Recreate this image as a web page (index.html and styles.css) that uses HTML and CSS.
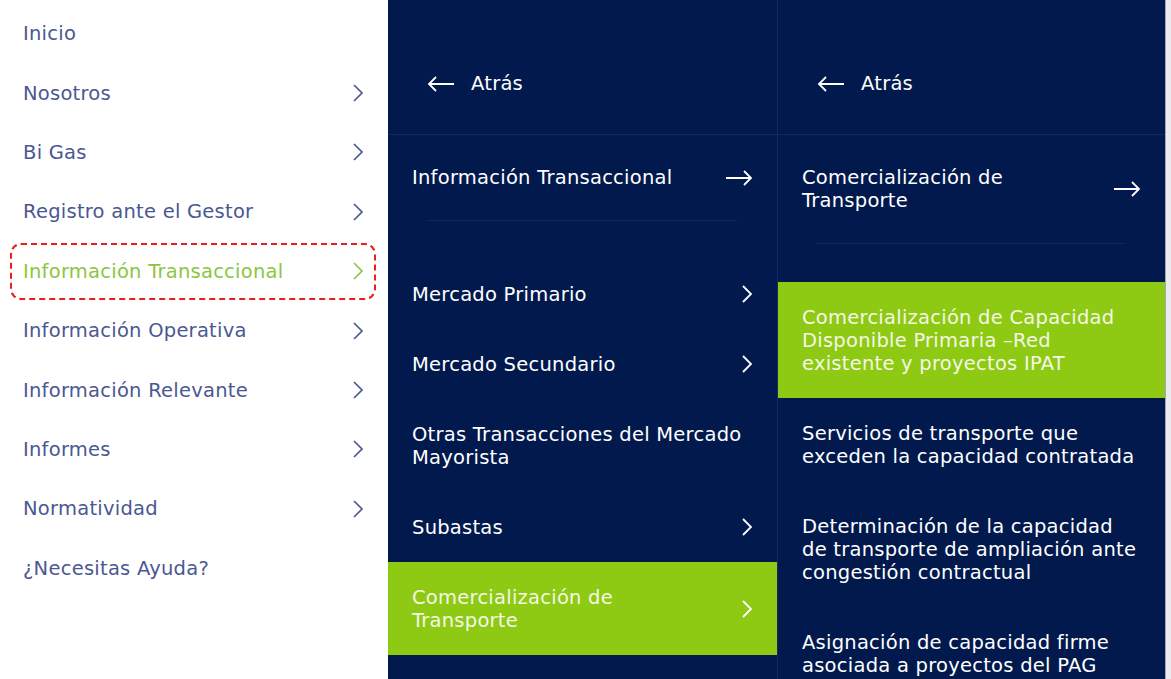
FILE: index.html
```html
<!DOCTYPE html>
<html lang="es">
<head>
<meta charset="utf-8">
<title>Menú</title>
<link rel="stylesheet" href="styles.css">
</head>
<body>
<div class="page">
  <nav class="main">
    <ul class="main-list">
      <li class="main-item"><span>Inicio</span></li>
      <li class="main-item"><span>Nosotros</span><svg class="chev" viewBox="0 0 12 20"><path d="M2 2 L10 10 L2 18"/></svg></li>
      <li class="main-item"><span>Bi Gas</span><svg class="chev" viewBox="0 0 12 20"><path d="M2 2 L10 10 L2 18"/></svg></li>
      <li class="main-item"><span>Registro ante el Gestor</span><svg class="chev" viewBox="0 0 12 20"><path d="M2 2 L10 10 L2 18"/></svg></li>
      <li class="main-item active"><span>Información Transaccional</span><svg class="chev" viewBox="0 0 12 20"><path d="M2 2 L10 10 L2 18"/></svg></li>
      <li class="main-item"><span>Información Operativa</span><svg class="chev" viewBox="0 0 12 20"><path d="M2 2 L10 10 L2 18"/></svg></li>
      <li class="main-item"><span>Información Relevante</span><svg class="chev" viewBox="0 0 12 20"><path d="M2 2 L10 10 L2 18"/></svg></li>
      <li class="main-item"><span>Informes</span><svg class="chev" viewBox="0 0 12 20"><path d="M2 2 L10 10 L2 18"/></svg></li>
      <li class="main-item"><span>Normatividad</span><svg class="chev" viewBox="0 0 12 20"><path d="M2 2 L10 10 L2 18"/></svg></li>
      <li class="main-item"><span>¿Necesitas Ayuda?</span></li>
    </ul>
  </nav>

  <section class="panel">
    <div class="back"><svg class="arrow" viewBox="0 0 28 18"><path d="M27 9 H2 M9 2 L2 9 L9 16"/></svg><span>Atrás</span></div>
    <div class="title"><span>Información Transaccional</span><svg class="arrow" viewBox="0 0 28 18"><path d="M1 9 H26 M19 2 L26 9 L19 16"/></svg></div>
    <ul class="sub-list">
      <li class="sub-item"><span>Mercado Primario</span><svg class="chev" viewBox="0 0 12 20"><path d="M2 2 L10 10 L2 18"/></svg></li>
      <li class="sub-item"><span>Mercado Secundario</span><svg class="chev" viewBox="0 0 12 20"><path d="M2 2 L10 10 L2 18"/></svg></li>
      <li class="sub-item"><span>Otras Transacciones del Mercado<br>Mayorista</span></li>
      <li class="sub-item"><span>Subastas</span><svg class="chev" viewBox="0 0 12 20"><path d="M2 2 L10 10 L2 18"/></svg></li>
      <li class="sub-item selected"><span>Comercialización de<br>Transporte</span><svg class="chev" viewBox="0 0 12 20"><path d="M2 2 L10 10 L2 18"/></svg></li>
    </ul>
  </section>

  <section class="panel panel-third">
    <div class="back"><svg class="arrow" viewBox="0 0 28 18"><path d="M27 9 H2 M9 2 L2 9 L9 16"/></svg><span>Atrás</span></div>
    <div class="title"><span>Comercialización de<br>Transporte</span><svg class="arrow" viewBox="0 0 28 18"><path d="M1 9 H26 M19 2 L26 9 L19 16"/></svg></div>
    <ul class="sub-list">
      <li class="sub-item selected"><span>Comercialización de Capacidad<br>Disponible Primaria –Red<br>existente y proyectos IPAT</span></li>
      <li class="sub-item"><span>Servicios de transporte que<br>exceden la capacidad contratada</span></li>
      <li class="sub-item"><span>Determinación de la capacidad<br>de transporte de ampliación ante<br>congestión contractual</span></li>
      <li class="sub-item"><span>Asignación de capacidad firme<br>asociada a proyectos del PAG</span></li>
    </ul>
  </section>

  <div class="rest"></div>
</div>
</body>
</html>
```

FILE: styles.css
```css
* { box-sizing: border-box; }
html, body {
  margin: 0;
  padding: 0;
  height: 100%;
  overflow: hidden;
}
body {
  font-family: "DejaVu Sans", "Liberation Sans", sans-serif;
  font-size: 19.5px;
  letter-spacing: 0.25px;
  line-height: 23px;
  background: #ffffff;
}
ul { list-style: none; margin: 0; padding: 0; }

.page {
  display: flex;
  height: 679px;
  width: 1171px;
}

/* left main menu */
.main {
  width: 388px;
  flex: none;
  background: #ffffff;
  padding-top: 4px;
}
.main-item {
  position: relative;
  display: flex;
  align-items: center;
  justify-content: space-between;
  height: 59.4px;
  padding: 0 24px 0 23px;
  color: #4a5892;
  white-space: nowrap;
}
.main-item .chev {
  width: 12px;
  height: 20px;
  fill: none;
  stroke: #4a5892;
  stroke-width: 1.7;
  flex: none;
}
.main-item.active { color: #8cc63f; }
.main-item.active .chev { stroke: #8cc63f; }
.main-item.active::after {
  content: "";
  position: absolute;
  left: 10px;
  right: 12px;
  top: 1px;
  bottom: 1px;
  border: 2px dashed #ee1c1c;
  border-radius: 11px;
}

/* navy panels */
.panel {
  width: 389px;
  flex: none;
  background: #01194d;
  color: #ffffff;
}
.panel-third {
  width: 388px;
  border-left: 1px solid #0f2c60;
}
.back {
  display: flex;
  align-items: center;
  gap: 16px;
  height: 135px;
  padding: 72px 0 39px 39px;
  border-bottom: 1px solid #0f2c60;
}
.arrow {
  width: 28px;
  height: 18px;
  fill: none;
  stroke: #ffffff;
  stroke-width: 1.8;
  flex: none;
}
.title {
  display: flex;
  align-items: center;
  justify-content: space-between;
  padding: 31px 24px 32px 24px;
  position: relative;
  white-space: nowrap;
}
.title::after {
  content: "";
  position: absolute;
  left: 39px;
  right: 40px;
  bottom: 0;
  border-bottom: 1px solid #0f2c60;
}
.sub-list {
  margin-top: 38px;
}
.sub-item {
  display: flex;
  align-items: center;
  justify-content: space-between;
  padding: 23.5px 24px;
  white-space: nowrap;
}
.sub-item .chev {
  width: 12px;
  height: 20px;
  fill: none;
  stroke: #ffffff;
  stroke-width: 1.8;
  flex: none;
}
.sub-item.selected {
  background: #8ec914;
  color: #f4f8e4;
}
.panel-third .sub-item { padding-right: 10px; }

.rest {
  flex: 1;
  background: #ececf0;
  border-left: 1px solid #a3a6b3;
}
```
